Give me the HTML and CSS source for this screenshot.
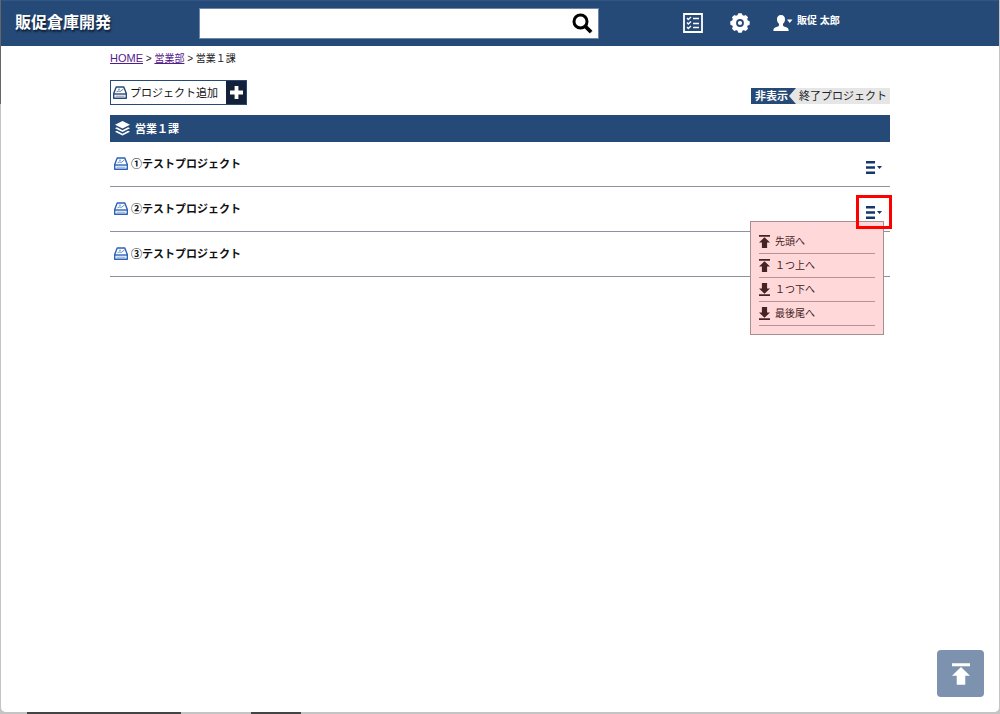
FILE: index.html
```html
<!DOCTYPE html>
<html lang="ja">
<head>
  <meta charset="UTF-8">
  <meta name="viewport" content="width=device-width, initial-scale=1.0">
  <title>販促倉庫開発</title>
  <link rel="stylesheet" href="styles.css">
</head>
<body>
  <!-- shared icons -->
  <svg class="sprite" aria-hidden="true">
    <symbol id="icon-project" viewBox="0 0 14 13">
      <path d="M3.200 1h7.600l2.500 6.500v4.700H.7V7.500z" fill="#fff" stroke="currentColor" stroke-width="1.400" stroke-linejoin="round"/>
      <path d="M1 8h12" fill="none" stroke="currentColor" stroke-width="1.400"/>
      <path d="M2.500 10.200h9" fill="none" stroke="currentColor" stroke-width=".6"/>
      <path d="M3.500 5.800l2.500-1 1 .8 3.500-2.600M5 3.200h2" fill="none" stroke="currentColor" stroke-width=".7"/>
    </symbol>
    <symbol id="icon-top" viewBox="0 0 11 13">
      <path d="M0 0h11v1.700H0zM5.500 2.200L11 7.500H8.100V13H2.900V7.500H0z" fill="currentColor"/>
    </symbol>
    <symbol id="icon-bottom" viewBox="0 0 11 13">
      <path d="M0 11.300h11V13H0zM5.500 10.800L11 5.500H8.100V0H2.900v5.500H0z" fill="currentColor"/>
    </symbol>
    <symbol id="icon-menu" viewBox="0 0 16 13">
      <path d="M0 0h9v2.600H0zM0 5.200h9v2.600H0zM0 10.400h9V13H0zM11 5h5l-2.500 3z" fill="currentColor"/>
    </symbol>
  </svg>

  <header class="header">
    <h1 class="logo">販促倉庫開発</h1>
    <form class="search">
      <input class="search-input" type="text" aria-label="検索">
      <button class="search-button" type="submit" aria-label="検索">
        <svg width="22" height="22" viewBox="0 0 22 22">
          <path d="M14.500 14.500l5 5" stroke="#bbb" stroke-width="3.600"/>
          <circle cx="8.500" cy="8.500" r="6.500" fill="none" stroke="#000" stroke-width="3"/>
          <path d="M13 13l6 6" stroke="#000" stroke-width="3.800"/>
        </svg>
      </button>
    </form>
    <nav class="header-nav">
      <a href="#" aria-label="タスク">
        <svg width="20" height="20" viewBox="0 0 20 20" fill="none" stroke="#fff">
          <path d="M1 1h18v18H1z" stroke-width="1.800"/>
          <path d="M4 5l1.300 1.500L8 4M4 9.500L5.300 11 8 8.500M4 14l1.300 1.500L8 13" stroke-width="1.300"/>
          <path d="M10 5.500h6M10 10.500h6M10 14.500h6" stroke-width="1.300"/>
        </svg>
      </a>
      <a href="#" aria-label="設定">
        <svg width="20" height="20" viewBox="0 0 20 20">
          <g fill="#fff">
            <circle cx="10" cy="10" r="8.200"/>
            <rect id="tooth" x="7.800" y="0.300" width="4.400" height="19.400" rx="1.200"/>
            <use href="#tooth" transform="rotate(45 10 10)"/>
            <use href="#tooth" transform="rotate(90 10 10)"/>
            <use href="#tooth" transform="rotate(135 10 10)"/>
          </g>
          <circle cx="10" cy="10" r="3" fill="#fff" stroke="#264a78" stroke-width="1.800"/>
        </svg>
      </a>
      <a class="user" href="#">
        <svg width="20" height="16" viewBox="0 0 20 16" fill="#fff">
          <path d="M8 0c2.600 0 4 1.900 4 4.300 0 2-.8 3.500-2 4.500v1.400c0 .8 1 1.300 2.600 1.900 2 .7 3 1.300 3 3.300V16H.4v-.6c0-2 1-2.600 3-3.300C5 11.500 6 11 6 10.200V8.800c-1.200-1-2-2.500-2-4.500C4 1.900 5.400 0 8 0z"/>
          <path d="M14 4.500h5.500L16.700 8z"/>
        </svg>
        <span>販促 太郎</span>
      </a>
    </nav>
  </header>

  <main class="container">
    <nav class="breadcrumb">
      <a class="breadcrumb-home" href="#">HOME</a> &gt; <a href="#">営業部</a> &gt; 営業１課
    </nav>

    <div class="toolbar">
      <button class="add-button" type="button">
        <svg width="14" height="13"><use href="#icon-project"/></svg>
        <span class="add-label">プロジェクト追加</span>
        <span class="add-plus">
          <svg width="13" height="13" viewBox="0 0 13 13"><path d="M6.500 0v13M0 6.500h13" stroke="#fff" stroke-width="3.800"/></svg>
        </span>
      </button>
      <button class="toggle" type="button">
        <span class="toggle-state">非表示</span>
        <span class="toggle-label">終了プロジェクト</span>
      </button>
    </div>

    <h2 class="section-title">
      <svg width="15" height="15" viewBox="0 0 15 15" fill="#fff">
        <path d="M7.500 0L15 3.800 7.500 7.600 0 3.800z"/>
        <path d="M0 7.300l1.900-1 5.600 2.900 5.600-2.900 1.900 1-7.500 3.800z"/>
        <path d="M0 10.800l1.900-1 5.600 2.900 5.600-2.900 1.900 1L7.500 14.600z"/>
      </svg>
      営業１課
    </h2>

    <ul class="project-list">
      <li class="project">
        <a class="project-link" href="#">
          <svg width="14" height="13"><use href="#icon-project"/></svg>①テストプロジェクト
        </a>
        <button class="menu-button" type="button" aria-label="メニュー"><svg width="16" height="13"><use href="#icon-menu"/></svg></button>
      </li>
      <li class="project">
        <a class="project-link" href="#">
          <svg width="14" height="13"><use href="#icon-project"/></svg>②テストプロジェクト
        </a>
        <button class="menu-button active" type="button" aria-label="メニュー"><svg width="16" height="13"><use href="#icon-menu"/></svg></button>
        <div class="menu">
          <button class="menu-item" type="button"><svg width="11" height="13"><use href="#icon-top"/></svg>先頭へ</button>
          <button class="menu-item" type="button"><svg width="11" height="13"><use href="#icon-top"/></svg>１つ上へ</button>
          <button class="menu-item" type="button"><svg width="11" height="13"><use href="#icon-bottom"/></svg>１つ下へ</button>
          <button class="menu-item" type="button"><svg width="11" height="13"><use href="#icon-bottom"/></svg>最後尾へ</button>
        </div>
      </li>
      <li class="project">
        <a class="project-link" href="#">
          <svg width="14" height="13"><use href="#icon-project"/></svg>③テストプロジェクト
        </a>
      </li>
    </ul>
  </main>

  <a class="page-top" href="#" aria-label="ページトップへ"><svg width="18" height="22"><use href="#icon-top"/></svg></a>
</body>
</html>
```

FILE: styles.css
```css
:root {
  --navy: #264a78;
  --navy-dark: #122138;
  --line: #8c939f;
  --pink: #ffd9d9;
}

* {
  box-sizing: border-box;
}

/* window edge: shows only through the thin body border */
html {
  background:
    linear-gradient(#444, #444) 27px 100% / 154px 2px no-repeat,
    linear-gradient(#444, #444) 251px 100% / 50px 2px no-repeat,
    linear-gradient(#666, #666) 0 0 / 1px 104px no-repeat,
    #c4c4c4;
}

body {
  margin: 0;
  min-height: 100vh;
  background: #fff padding-box;
  border: solid transparent;
  border-width: 0 1px 2px;
  border-radius: 0 0 6px 6px;
  color: #222;
  font-family: "Liberation Sans", "Noto Sans CJK JP", sans-serif;
  font-size: 11px;
  line-height: 16px;
}

button {
  margin: 0;
  padding: 0;
  border: 0;
  background: none;
  color: inherit;
  font: inherit;
  cursor: pointer;
}

svg {
  display: block;
  flex: none;
}

.sprite {
  position: absolute;
  width: 0;
  height: 0;
}

/* header */
.header {
  display: flex;
  align-items: center;
  height: 46px;
  padding-left: 14px;
  background: var(--navy);
  border-top: 1px solid #2f5684;
}

.logo {
  flex: none;
  width: 184px;
  margin: 0;
  padding-bottom: 2px;
  color: #fff;
  font-size: 16px;
  font-weight: bold;
  line-height: 24px;
  text-shadow: 1px 2px 2px #0b1c33;
}

.search {
  display: flex;
  width: 40vw;
  height: 31px;
  background: #fff;
  border: 1px solid #6f87a6;
}

.search-input {
  flex: 1;
  min-width: 0;
  padding: 0 8px;
  border: 0;
  outline: none;
  background: none;
  font-size: 14px;
}

.search-button {
  padding: 0 4px;
}

.header-nav {
  display: flex;
  align-items: center;
  gap: 27px;
  margin-left: 84px;
  padding-bottom: 2px;
}

.user {
  display: flex;
  gap: 4px;
  margin-left: -4px;
  color: #fff;
  font-size: 10px;
  font-weight: bold;
  line-height: 12px;
  text-decoration: none;
}

/* content */
.container {
  width: 80%;
  max-width: 780px;
  margin: 0 auto;
}

.breadcrumb {
  padding-top: 4px;
  font-size: 10px;
}

.breadcrumb a {
  color: #551a8b;
}

.breadcrumb .breadcrumb-home {
  font-size: 11px;
}

.toolbar {
  display: flex;
  align-items: flex-end;
  justify-content: space-between;
  margin: 13px 0 10px;
}

.add-button {
  display: flex;
  align-items: center;
  height: 25px;
  padding-left: 2px;
  border: 1px solid var(--navy);
  color: var(--navy);
}

.add-label {
  padding: 1px 8px 0 3px;
  color: #111;
}

.add-plus {
  display: flex;
  align-items: center;
  justify-content: center;
  align-self: stretch;
  width: 20px;
  background: var(--navy-dark);
}

.toggle {
  display: flex;
  height: 16px;
  margin-bottom: 1px;
  background: #e6e6e6;
  color: #222;
}

.toggle-state {
  padding: 0 8px 0 4px;
  background: var(--navy);
  color: #fff;
  font-weight: bold;
}

.toggle-state::after {
  content: "";
  float: right;
  margin-right: -8px;
  border: solid transparent;
  border-width: 8px 7px 8px 0;
  border-right-color: #e6e6e6;
}

.toggle-label {
  padding: 0 3px;
}

.section-title {
  display: flex;
  align-items: center;
  gap: 5px;
  height: 27px;
  margin: 0;
  padding-left: 5px;
  background: var(--navy);
  color: #fff;
  font-size: 11px;
  font-weight: bold;
}

.project-list {
  margin: 0;
  padding: 0;
  list-style: none;
}

.project {
  position: relative;
  display: flex;
  justify-content: space-between;
  height: 45px;
  border-bottom: 1px solid var(--line);
}

.project-link {
  display: flex;
  align-items: center;
  gap: 3px;
  height: 43px;
  padding-left: 4px;
  color: #111;
  font-weight: bold;
  text-decoration: none;
}

.project-link svg {
  color: #2a62b8;
}

.menu-button {
  display: flex;
  align-items: center;
  justify-content: center;
  width: 36px;
  height: 34px;
  margin: 8px -2px 0 0;
  border: 3px solid transparent;
  color: #14376e;
}

.menu-button.active {
  z-index: 2;
  border-color: #f00;
}

/* drop-down */
.menu {
  position: absolute;
  z-index: 1;
  top: 34px;
  right: 6px;
  width: 134px;
  padding: 8px;
  background: var(--pink);
  border: 1px solid #a58f93;
}

.menu-item {
  display: flex;
  align-items: center;
  gap: 5px;
  width: 100%;
  height: 24px;
  border-bottom: 1px solid #b79096;
  color: #452326;
  font-size: 10px;
}

.page-top {
  position: fixed;
  right: 16px;
  bottom: 17px;
  display: flex;
  align-items: center;
  justify-content: center;
  width: 47px;
  height: 47px;
  border-radius: 4px;
  background: #7d92af;
  color: #fff;
}
```
